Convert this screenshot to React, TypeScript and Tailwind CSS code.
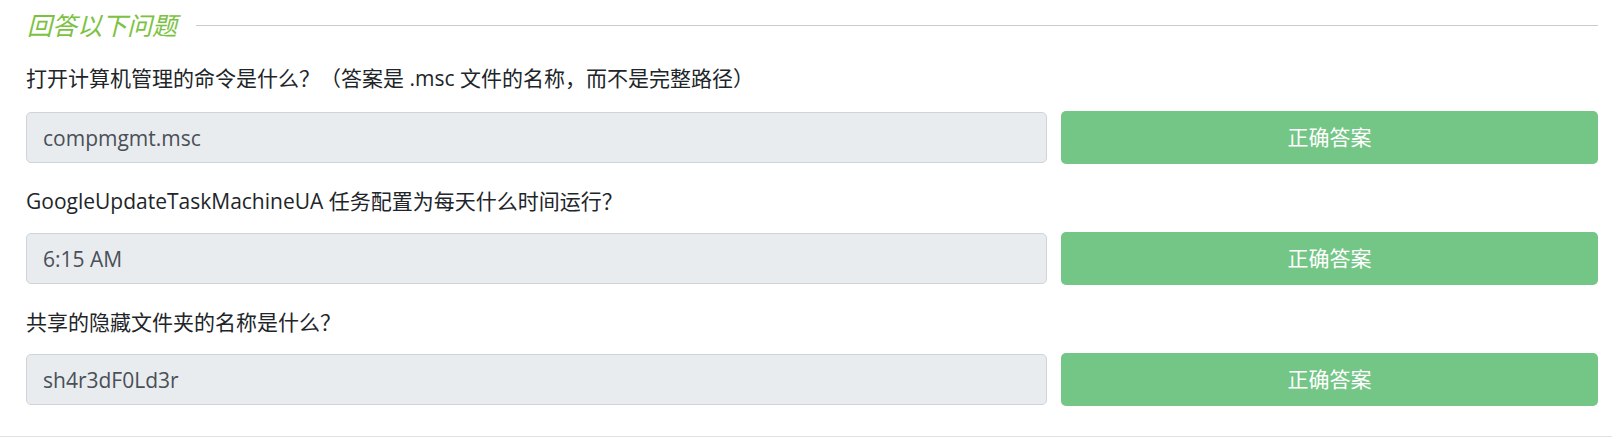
const questions = [
  {
    label: "打开计算机管理的命令是什么？（答案是 .msc 文件的名称，而不是完整路径）",
    answer: "compmgmt.msc",
  },
  {
    label: "GoogleUpdateTaskMachineUA 任务配置为每天什么时间运行？",
    answer: "6:15 AM",
  },
  {
    label: "共享的隐藏文件夹的名称是什么？",
    answer: "sh4r3dF0Ld3r",
  },
];

const font = "font-['Open_Sans','Noto_Sans_CJK_SC',sans-serif]";

export default function App() {
  return (
    <div
      className={`${font} bg-white pl-[26px] pr-[14px] pt-[10px] pb-[30px] border-b border-[#dee2e6]`}
    >
      {/* section title */}
      <div className="flex items-center h-[30px]">
        <span className="italic text-[25px] leading-[30px] text-[#7cc242] pl-px">
          回答以下问题
        </span>
        <div className="flex-1 h-px bg-[#cccccc] ml-[19px]" />
      </div>

      {questions.map((q, i) => (
        <div key={i}>
          <div
            className={`text-[21px] leading-[30px] text-[#212529] ${
              i === 0 ? "mt-[23px] mb-[18px]" : "mt-[22px] mb-4"
            }`}
          >
            {q.label}
          </div>
          <div className="flex items-center gap-[14px] h-[53px]">
            <input
              disabled
              value={q.answer}
              className={`${font} flex-1 h-[51px] rounded-[5px] border border-[#ced4da] bg-[#e9ecef] px-[16px] text-[21px] text-[#495057]`}
            />
            <button
              disabled
              className={`${font} w-[537px] h-[53px] rounded-[5px] bg-[#73c686] text-white text-[21px]`}
            >
              正确答案
            </button>
          </div>
        </div>
      ))}
    </div>
  );
}
